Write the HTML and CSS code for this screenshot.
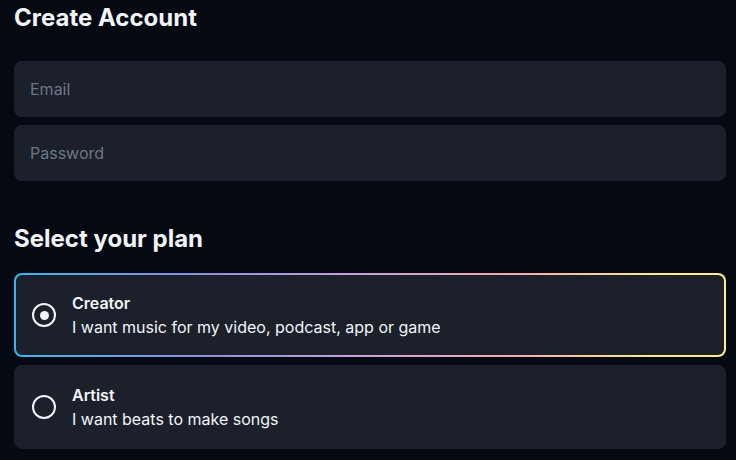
FILE: index.html
```html
<!DOCTYPE html>
<html lang="en">
<head>
<meta charset="utf-8">
<title>Create Account</title>
<link rel="stylesheet" href="styles.css">
</head>
<body>
<main class="page">
  <h1 class="title">Create Account</h1>
  <div class="fields">
    <input class="field" type="email" placeholder="Email" autofocus>
    <input class="field" type="password" placeholder="Password">
  </div>
  <h2 class="title plan-title">Select your plan</h2>
  <div class="plans">
    <label class="plan plan-selected">
      <span class="radio radio-on"></span>
      <span class="plan-text">
        <span class="plan-name">Creator</span>
        <span class="plan-desc">I want music for my video, podcast, app or game</span>
      </span>
    </label>
    <label class="plan">
      <span class="radio"></span>
      <span class="plan-text">
        <span class="plan-name">Artist</span>
        <span class="plan-desc">I want beats to make songs</span>
      </span>
    </label>
  </div>
</main>
</body>
</html>
```
FILE: styles.css
```css
* { box-sizing: border-box; }
html, body { margin: 0; padding: 0; }
body {
  background: #050a12;
  color: #f1f5f9;
  font-family: Inter, "Noto Sans", sans-serif;
}
.page {
  padding: 2px 10px 0 14px;
  display: flex;
  flex-direction: column;
}
.title {
  margin: 0;
  font-size: 24px;
  line-height: 32px;
  font-weight: 700;
  color: #f1f5f9;
}
.fields {
  margin-top: 27px;
  display: flex;
  flex-direction: column;
  gap: 8px;
}
.field {
  height: 56px;
  width: 100%;
  border: none;
  outline: none;
  border-radius: 8px;
  background: #1b202a;
  color: #f1f5f9;
  padding: 0 16px;
  font-family: Inter, "Noto Sans", sans-serif;
  font-size: 16px;
  caret-color: #e2e8f0;
}
.field::placeholder { color: #6b7886; }
.plan-title { margin-top: 42px; }
.plans {
  margin-top: 18px;
  display: flex;
  flex-direction: column;
  gap: 8px;
}
.plan {
  height: 84px;
  border-radius: 8px;
  background: #1b202a;
  display: flex;
  align-items: center;
  padding: 0 0 0 16px;
  gap: 16px;
  border: 2px solid transparent;
}
.plan-selected {
  background:
    linear-gradient(#1b202a, #1b202a) padding-box,
    linear-gradient(to right, #38b6f0 0%, #8b8ee0 25%, #c9a0dc 48%, #f6a9b0 70%, #fde68a 88%, #fef08a 100%) border-box;
}
.radio {
  width: 24px;
  height: 24px;
  border: 2px solid #f1f5f9;
  border-radius: 50%;
  flex: none;
  display: flex;
  align-items: center;
  justify-content: center;
}
.radio-on::after {
  content: "";
  width: 9px;
  height: 9px;
  border-radius: 50%;
  background: #f1f5f9;
}
.plan-text {
  display: flex;
  flex-direction: column;
  font-size: 16px;
  line-height: 24px;
}
.plan-name { font-weight: 600; }
.plan-desc { font-weight: 400; color: #f1f5f9; }
```
